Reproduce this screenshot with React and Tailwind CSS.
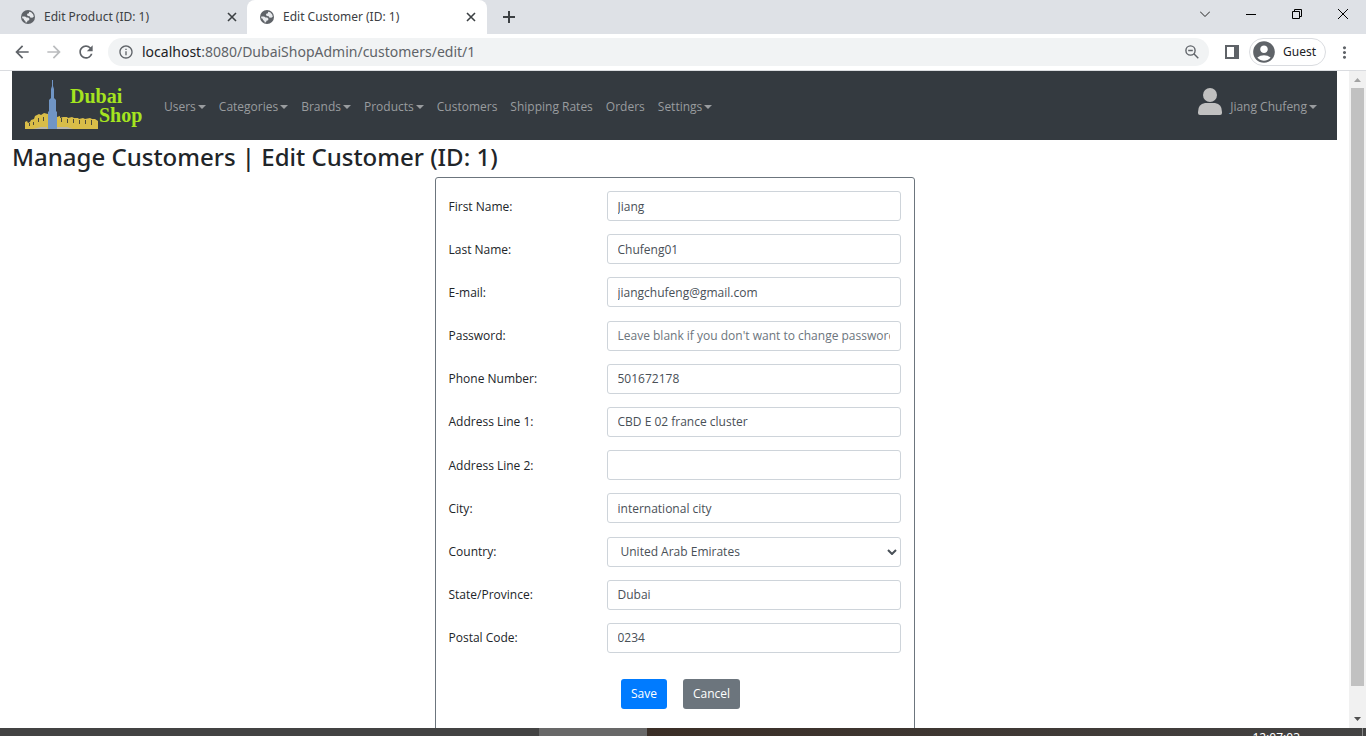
import React from "react";
import {
  MdArrowBack,
  MdArrowForward,
  MdRefresh,
  MdInfoOutline,
  MdMoreVert,
  MdAccountCircle,
} from "react-icons/md";

const NAV = [
  { label: "Users", menu: true },
  { label: "Categories", menu: true },
  { label: "Brands", menu: true },
  { label: "Products", menu: true },
  { label: "Customers" },
  { label: "Shipping Rates" },
  { label: "Orders" },
  { label: "Settings", menu: true },
];

const FIELDS = [
  { id: "firstName", label: "First Name:", value: "Jiang" },
  { id: "lastName", label: "Last Name:", value: "Chufeng01" },
  { id: "email", label: "E-mail:", value: "jiangchufeng@gmail.com", type: "email" },
  {
    id: "password",
    label: "Password:",
    value: "",
    type: "password",
    placeholder: "Leave blank if you don't want to change password",
  },
  { id: "phone", label: "Phone Number:", value: "501672178" },
  { id: "address1", label: "Address Line 1:", value: "CBD E 02 france cluster" },
  { id: "address2", label: "Address Line 2:", value: "" },
  { id: "city", label: "City:", value: "international city" },
  { id: "country", label: "Country:", value: "United Arab Emirates", select: true },
  { id: "state", label: "State/Province:", value: "Dubai" },
  { id: "postal", label: "Postal Code:", value: "0234" },
];

const CONTROL =
  "h-[30px] w-full min-w-0 rounded-[3px] border border-[#ced4da] bg-white px-[10px] text-[#495057] outline-none placeholder:text-[#6c757d]";

function CloseIcon() {
  return (
    <svg viewBox="0 0 10 10" className="size-[10px]" stroke="#3c4043" strokeWidth="1.6" fill="none">
      <path d="M1 1l8 8M9 1l-8 8" />
    </svg>
  );
}

function GlobeIcon() {
  return (
    <svg viewBox="0 0 14 14" className="size-[14px] shrink-0">
      <circle cx="7" cy="7" r="7" fill="#5f6368" />
      <path
        fill="#e8eaed"
        d="M8 1.800l2.200.4 2 2.200.6 2.400-1.600.9-2-.3-.5-1.200-1.900-.2-.9-1.200.8-1.300 1.300-.2zM1.200 6.600h2.900l1.400.8 1.700.1 1.300 1.300-.4 1.500-1.600.5-.4 1.300-1.300.6-.5-1.600-1.300-1-.3-1.300-1.500-.6z"
      />
    </svg>
  );
}

function Tab({ title, active }) {
  return (
    <div
      className={
        active
          ? "flex w-[240px] items-center rounded-t-lg bg-white pr-[11px] pl-[13px]"
          : "flex w-[247px] items-center pr-[10px] pl-[21px]"
      }
    >
      <GlobeIcon />
      <span className="ml-[9px] flex-1 whitespace-nowrap">{title}</span>
      <button type="button" aria-label="Close tab">
        <CloseIcon />
      </button>
    </div>
  );
}

function TabStrip() {
  return (
    <div className="flex h-[34px] shrink-0 bg-[#dee1e6] text-[12px] text-[#3c4043]">
      <Tab title="Edit Product (ID: 1)" />
      <Tab title="Edit Customer (ID: 1)" active />
      <button type="button" aria-label="New tab" className="ml-4 flex items-center">
        <svg viewBox="0 0 12 12" className="size-3" stroke="#3c4043" strokeWidth="2">
          <path d="M6 0v12M0 6h12" />
        </svg>
      </button>
      <div className="ml-auto flex items-center gap-9 pr-[18px] pb-[6px]">
        <button type="button" aria-label="Search tabs">
          <svg viewBox="0 0 10 6" className="h-[6px] w-[10px]" stroke="#222" fill="none">
            <path d="M0 .5l5 5 5-5" />
          </svg>
        </button>
        <button type="button" aria-label="Minimize">
          <svg viewBox="0 0 10 10" className="size-[10px]" stroke="#000" fill="none">
            <path d="M0 5.500h10" />
          </svg>
        </button>
        <button type="button" aria-label="Restore">
          <svg viewBox="0 0 10 10" className="size-[10px]" stroke="#000" fill="none">
            <path d="M.5 2.500h7v7h-7zM2.500 2.500v-2h7v7h-2" />
          </svg>
        </button>
        <button type="button" aria-label="Close window">
          <svg viewBox="0 0 10 10" className="size-[10px]" stroke="#000" fill="none">
            <path d="M0 0l10 10M10 0L0 10" />
          </svg>
        </button>
      </div>
    </div>
  );
}

function Toolbar() {
  return (
    <div className="flex h-[37px] shrink-0 items-center border-b border-[#dadce0] bg-white pl-3 text-[#5f6368]">
      <button type="button" aria-label="Back">
        <MdArrowBack className="size-5" />
      </button>
      <button type="button" aria-label="Forward" className="ml-3 text-[#babcbe]">
        <MdArrowForward className="size-5" />
      </button>
      <button type="button" aria-label="Reload" className="ml-3">
        <MdRefresh className="size-5" />
      </button>
      <div className="ml-3 flex h-7 flex-1 items-center rounded-full bg-[#f1f3f4] px-[10px]">
        <MdInfoOutline className="size-4 shrink-0" />
        <span className="ml-2 flex-1 text-[14px] leading-5 whitespace-nowrap">
          <span className="text-[#202124]">localhost</span>:8080/DubaiShopAdmin/customers/edit/1
        </span>
        <svg viewBox="0 0 14 14" className="size-[14px] shrink-0" fill="none" stroke="#5f6368" strokeWidth="1.4">
          <circle cx="5.500" cy="5.500" r="4.600" />
          <path d="M3.200 5.500h4.600M8.800 8.800l4.500 4.500" />
        </svg>
      </div>
      <button type="button" aria-label="Side panel" className="ml-[16px]">
        <svg viewBox="0 0 14 14" className="size-[14px]" fill="#5f6368">
          <path fillRule="evenodd" d="M0 0h14v14H0zM2 2v10h7V2z" />
        </svg>
      </button>
      <button
        type="button"
        className="ml-[10px] flex h-7 items-center gap-[6px] rounded-full border border-[#dadce0] pr-[9px] pl-[1px] text-[12px] text-[#202124]"
      >
        <MdAccountCircle className="size-[26px] text-[#5f6368]" />
        Guest
      </button>
      <button type="button" aria-label="Menu" className="mr-3 ml-[9px]">
        <MdMoreVert className="size-[19px]" />
      </button>
    </div>
  );
}

function Logo() {
  return (
    <svg viewBox="0 0 118 52" className="h-[52px] w-[118px] overflow-visible" role="img" aria-label="Dubai Shop">
      <path
        fill="#d9bd48"
        d="M0 49v-7l2-1 1 2 2-1 1-2 3-1 1-3 4-2 2 1 3-2 4 1v15zM32 49V37l3-1v2l3-1h4l1 1 4-1 2 1h4l1 1 4-1 2 1 5-1 2 1 3 0 3 2v8z"
      />
      <path
        fill="#4d4a3a"
        d="M4 46v-3h1v3zM8 45v-3h1v3zM13 42v-4h1v4zM18 41v-4h1v4zM36 42v-4h1v4zM42 43v-4h1v4zM48 43v-4h1v4zM54 44v-4h1v4zM60 44v-4h1v4zM66 45v-5h1v5z"
      />
      <path fill="#b9b6a8" d="M8 49l8-2h6v2zM32 47h10l6 2H32z" />
      <path fill="#7095c5" d="M27 0h1v6l1 3v9l2 2v11l1 1v17h-9V32l1-1V20l2-2V9l1-3z" />
      <text x="45" y="23" fill="#a5e41f" fontFamily="Liberation Serif, serif" fontWeight="700" fontSize="20">
        Dubai
      </text>
      <text x="74" y="42" fill="#a5e41f" fontFamily="Liberation Serif, serif" fontWeight="700" fontSize="20">
        Shop
      </text>
    </svg>
  );
}

function Caret() {
  return (
    <svg viewBox="0 0 8 4" className="ml-[2px] h-1 w-2" fill="currentColor">
      <path d="M0 0h8L4 4z" />
    </svg>
  );
}

function Navbar() {
  return (
    <nav className="flex h-[69px] items-center bg-[#343a40] pr-5 pl-[13px] text-[#999c9f]">
      <a href="#home">
        <Logo />
      </a>
      <ul className="ml-[21px] flex flex-1 items-center gap-[13px] pt-[2px]">
        {NAV.map((item) => (
          <li key={item.label}>
            <a href="#nav" className="flex items-center whitespace-nowrap">
              {item.label}
              {item.menu && <Caret />}
            </a>
          </li>
        ))}
      </ul>
      <svg viewBox="0 0 24 27" className="mb-2 h-[27px] w-6" fill="#c0c0c0">
        <circle cx="12" cy="7" r="7" />
        <path d="M7 15h10q7 1 7 9v1q0 2-2 2H2q-2 0-2-2v-1q0-8 7-9z" />
      </svg>
      <a href="#account" className="ml-[8px] flex items-center pt-[2px] whitespace-nowrap">
        Jiang Chufeng
        <Caret />
      </a>
    </nav>
  );
}

function Field({ field }) {
  return (
    <div className="grid grid-cols-[158px_1fr] items-center">
      <label htmlFor={field.id} className="pt-px">
        {field.label}
      </label>
      {field.select ? (
        <div className="grid items-center">
          <select id={field.id} className={CONTROL + " col-start-1 row-start-1 appearance-none pl-[13px]"}>
            <option>{field.value}</option>
          </select>
          <svg
            viewBox="0 0 10 6"
            className="pointer-events-none col-start-1 row-start-1 mr-1 h-[6px] w-[10px] justify-self-end"
            fill="none"
            stroke="#495057"
            strokeWidth="2"
          >
            <path d="M1 1l4 4 4-4" />
          </svg>
        </div>
      ) : (
        <input
          id={field.id}
          type={field.type || "text"}
          defaultValue={field.value}
          placeholder={field.placeholder}
          className={CONTROL}
        />
      )}
    </div>
  );
}

export default function App() {
  return (
    <div className="flex h-screen flex-col overflow-hidden bg-white font-['Noto_Sans',sans-serif]">
      <TabStrip />
      <Toolbar />
      <div className="flex min-h-0 flex-1">
        <main className="min-w-0 flex-1 overflow-hidden px-3 font-['Open_Sans','Noto_Sans',sans-serif] text-[12px] text-[#212529]">
          <Navbar />
          <h2 className="pt-px pb-[5px] font-['Noto_Sans',sans-serif] text-[24px] leading-[31px] font-medium">
            Manage Customers | Edit Customer (ID: 1)
          </h2>
          <form className="mx-auto w-[480px] rounded-[3px] border border-[#6c757d] px-[13px] pt-[13px] pb-8">
            <div className="flex min-h-[462px] flex-col justify-between">
              {FIELDS.map((f) => (
                <Field key={f.id} field={f} />
              ))}
            </div>
            <div className="mt-[26px] flex justify-center gap-4 pl-3 text-white">
              <button type="button" className="h-[30px] rounded-[3px] bg-[#007bff] px-[10px]">
                Save
              </button>
              <button type="button" className="h-[30px] rounded-[3px] bg-[#6c757d] px-[10px]">
                Cancel
              </button>
            </div>
          </form>
        </main>
        <div className="flex w-[17px] flex-col items-center justify-between bg-[#f1f1f1] pt-[7px] pb-[7px]">
          <svg viewBox="0 0 7 4" className="h-1 w-[7px]" fill="#a3a3a3">
            <path d="M0 4h7L3.500 0z" />
          </svg>
          <div className="mt-[6px] mb-[31px] w-[13px] flex-1 bg-[#c1c1c1]" />
          <svg viewBox="0 0 7 4" className="h-1 w-[7px]" fill="#505050">
            <path d="M0 0h7L3.500 4z" />
          </svg>
        </div>
      </div>
      <div className="flex h-2 shrink-0 overflow-hidden bg-linear-to-r from-[#434343] from-46% via-[#3a2e26] via-47% to-[#434343] text-[12px] text-white">
        <div className="ml-[539px] w-[108px] bg-[#686868]" />
        <div className="mr-[3px] flex flex-1 justify-end border-r border-[#8a8a8a] pt-[3px] pr-[62px] leading-[14px]">
          12:07:03
        </div>
      </div>
    </div>
  );
}
